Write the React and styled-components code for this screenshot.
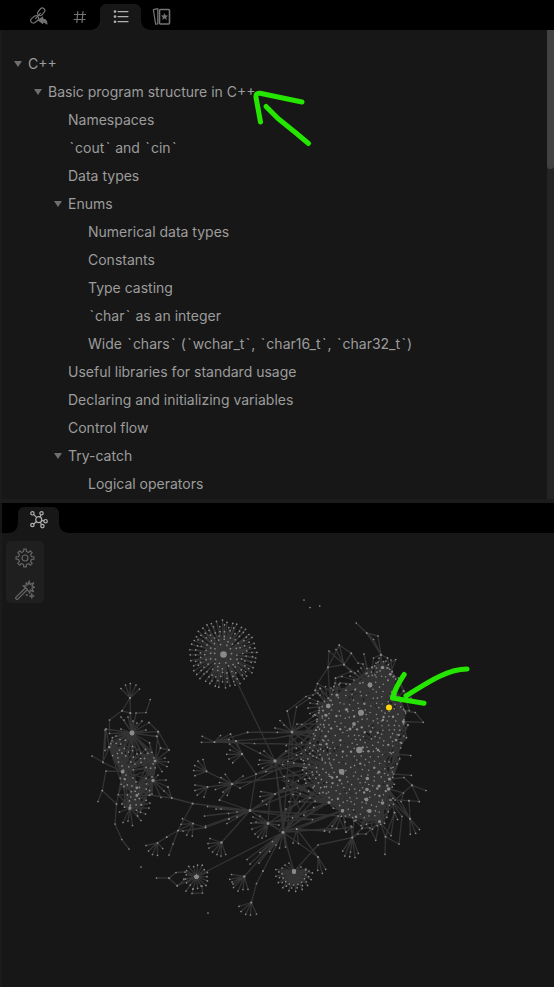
import React from "react";
import styled, { createGlobalStyle } from "styled-components";

const GlobalStyle = createGlobalStyle`
  * { box-sizing: border-box; }
  body { margin: 0; background: #171717; font-family: Inter, sans-serif; overflow: hidden; }
`;

const Sidebar = styled.div`
  position: relative;
  width: 554px;
  height: 987px;
  display: flex;
  flex-direction: column;
  background: #171717;
  overflow: hidden;
`;

const TabStrip = styled.div`
  height: 30px;
  flex: none;
  display: flex;
  align-items: flex-end;
  padding-left: ${(p) => (p.$inset ? 16 : 18)}px;
  margin-left: ${(p) => (p.$inset ? 2 : 0)}px;
  background: #000;
`;

const Tab = styled.div`
  position: relative;
  width: 41px;
  height: 26px;
  display: flex;
  align-items: center;
  justify-content: center;
  color: ${(p) => (p.$active ? "#b0b0b0" : "#747474")};
  background: ${(p) => (p.$active ? "#171717" : "transparent")};
  border-radius: 6px 6px 0 0;

  &::before,
  &::after {
    content: "";
    display: ${(p) => (p.$active ? "block" : "none")};
    position: absolute;
    bottom: 0;
    width: 9px;
    height: 9px;
  }
  &::before {
    right: 100%;
    background: radial-gradient(circle at 0 0, transparent 8.5px, #171717 9px);
  }
  &::after {
    left: 100%;
    background: radial-gradient(circle at 100% 0, transparent 8.5px, #171717 9px);
  }
`;

const OutlinePane = styled.div`
  height: 469px;
  flex: none;
  display: flex;
  border-left: 2px solid #1b1b1b;
`;

const Outline = styled.ul`
  flex: 1;
  margin: 0;
  padding: 20px 0 0 6px;
  list-style: none;
`;

const OutlineItem = styled.li`
  height: 28px;
  display: flex;
  align-items: center;
  gap: 6px;
  padding-left: ${(p) => p.$level * 20}px;
  font-size: 14px;
  line-height: 28px;
  color: #9c9c9c;
  white-space: pre;
`;

const Tick = styled.span`
  padding: 0 1.1px 0 1.4px;
`;

const Caret = styled.svg`
  width: 8px;
  height: 6px;
  margin-left: 6px;
  flex: none;
  visibility: ${(p) => (p.$open ? "visible" : "hidden")};
`;

const ScrollTrack = styled.div`
  width: 7px;
  background: #242424;
`;

const ScrollThumb = styled.div`
  height: 139px;
  background: #424242;
  border-radius: 0 0 4px 4px;
`;

const Divider = styled.div`
  height: 4px;
  flex: none;
  background: #1c1c1c;
`;

const GraphPane = styled.div`
  position: relative;
  flex: 1;
  display: flex;
  border-left: 2px solid #1b1b1b;
`;

const GraphCanvas = styled.svg`
  width: 552px;
  height: 454px;
  display: block;
`;

const GraphTools = styled.div`
  position: absolute;
  left: 4px;
  top: 8px;
  width: 38px;
  height: 62px;
  display: flex;
  flex-direction: column;
  align-items: center;
  justify-content: space-between;
  padding: 7px 0 3px;
  border-radius: 5px;
  background: #1f1f1f;
  color: #666;
`;

const Icon = styled.svg`
  width: 20px;
  height: 20px;
  display: block;
  fill: none;
  stroke: currentColor;
  stroke-width: 1.2;
  stroke-linecap: round;
  stroke-linejoin: round;
`;

const Marks = styled.svg`
  position: absolute;
  inset: 0;
  width: 554px;
  height: 987px;
  pointer-events: none;
  fill: none;
  stroke: #25e600;
  stroke-width: 5;
  stroke-linecap: round;
  stroke-linejoin: round;
`;

const BacklinkIcon = () => (
  <Icon viewBox="0 0 20 20">
    <rect x="8" y="2.4" width="8.4" height="5" rx="2.5" transform="rotate(-50 12.2 4.9)" />
    <rect x="1.4" y="9.8" width="8.6" height="5.2" rx="2.6" transform="rotate(-38 5.7 12.4)" />
    <path d="M6.6 11.6 11.4 6.4" />
    <path d="M9.6 13.2l4-3v1.9c3.2 0 4.4 2.5 4.2 4.9-.9-1.6-2.2-2.2-4.2-2.2v1.6z" fill="currentColor" />
  </Icon>
);

const HashIcon = () => (
  <Icon viewBox="0 0 20 20">
    <path d="M7.8 4.5 6.8 15.5M13 4.5l-1 11M4.5 7.5h11M4 12.5h11" />
  </Icon>
);

const ListIcon = () => (
  <Icon viewBox="0 0 20 20">
    <path d="M7 4.6h10M7 9.6h10M7 14.7h10" strokeWidth="1.2" />
    <g fill="currentColor" stroke="none">
      <circle cx="4" cy="4.6" r="1.3" />
      <circle cx="4" cy="9.6" r="1.3" />
      <circle cx="4" cy="14.7" r="1.3" />
    </g>
  </Icon>
);

const CardsIcon = () => (
  <Icon viewBox="0 0 20 20">
    <rect x="7.5" y="2.5" width="10" height="14.5" rx="1" strokeWidth="1.6" />
    <path d="M5.8 1.6 1.4 2.6l2.2 14.6 2.2-.3M5.8 1.6v15.3" />
    <path
      d="m12.5 6.6.9 2 2.2.2-1.6 1.5.5 2.2-2-1.2-2 1.2.5-2.2-1.6-1.5 2.2-.2z"
      fill="currentColor"
      strokeWidth="0.4"
    />
  </Icon>
);

const GraphIcon = () => (
  <Icon viewBox="0 0 20 20">
    <circle cx="9.7" cy="9.7" r="3" />
    <circle cx="3.4" cy="3.3" r="1.7" />
    <circle cx="12.5" cy="3.3" r="1.7" />
    <circle cx="16.6" cy="11.2" r="1.7" />
    <circle cx="13.4" cy="16.1" r="1.7" />
    <circle cx="3.4" cy="15" r="1.7" />
    <path d="m4.7 4.6 2.9 2.8M12 5l-1 2M12.8 10.4l2 .5M11.4 12.4l1.1 2.2M7.5 11.8 4.8 13.8" />
  </Icon>
);

const gearPath = (() => {
  const pts = [];
  for (let i = 0; i < 8; i++) {
    [[-0.22, 6.6], [-0.14, 9], [0.14, 9], [0.22, 6.6]].forEach(([off, r]) => {
      const a = (i * Math.PI) / 4 + off;
      pts.push(`${(10 + r * Math.sin(a)).toFixed(2)} ${(10 - r * Math.cos(a)).toFixed(2)}`);
    });
  }
  return `M${pts.join("L")}Z`;
})();

const GearIcon = () => (
  <Icon viewBox="0 0 20 20">
    <path d={gearPath} />
    <circle cx="10" cy="10" r="3" />
  </Icon>
);

const WandIcon = () => (
  <Icon viewBox="0 0 20 20">
    <path d="M.8 17.4 10.6 7.7l1.8 1.8-9.8 9.8c-.9.6-2.4-.9-1.8-1.9z" />
    <path d="M10.6 7.7 7.9 5.8l3.2.1.1-3.3 1.8 2.3L14.2.8l.9 3.8 3.6-1.8-1.8 3.4 2.6.9-2.6 1.3 1.6 3.2-3.3-1.5-.4 3.2-2.4-3.8" />
    <path d="m16.8 13.3.7 2 2 .7-2 .7-.7 2-.7-2-2-.7 2-.7z" fill="currentColor" strokeWidth="0.6" />
    <circle cx="11.8" cy="15" r=".5" />
  </Icon>
);

const OUTLINE = [
  [0, "C++", true],
  [1, "Basic program structure in C++", true],
  [2, "Namespaces"],
  [2, "`cout` and `cin`"],
  [2, "Data types"],
  [2, "Enums", true],
  [3, "Numerical data types"],
  [3, "Constants"],
  [3, "Type casting"],
  [3, "`char` as an integer"],
  [3, "Wide `chars` (`wchar_t`, `char16_t`, `char32_t`)"],
  [2, "Useful libraries for standard usage"],
  [2, "Declaring and initializing variables"],
  [2, "Control flow"],
  [2, "Try-catch", true],
  [3, "Logical operators"],
];

/* ---- Graph data ---- */

const nodes = [];
const links = [];

let seed = 20;
const random = () => {
  seed = (seed * 1664525 + 1013904223) % 4294967296;
  return seed / 4294967296;
};
const node = (x, y, r = 0.85) => nodes.push([x, y, r]);
const link = (a, b) => links.push([a[0], a[1], b[0], b[1]]);
const chain = (points) =>
  points.forEach((p, i) => {
    node(p[0], p[1]);
    if (i) link(points[i - 1], p);
  });
const fan = (x, y, r, leaves) => {
  leaves.forEach((p) => {
    node(p[0], p[1]);
    link([x, y], p);
  });
  node(x, y, r);
};
const nearest = (p, list, count) =>
  [...list]
    .sort((a, b) => Math.hypot(a[0] - p[0], a[1] - p[1]) - Math.hypot(b[0] - p[0], b[1] - p[1]))
    .slice(0, count);
const inside = (x, y, polygon) => {
  let hit = false;
  for (let i = 0, j = polygon.length - 1; i < polygon.length; j = i++) {
    const [xi, yi] = polygon[i];
    const [xj, yj] = polygon[j];
    if (yi > y !== yj > y && x < ((xj - xi) * (y - yi)) / (yj - yi) + xi) hit = !hit;
  }
  return hit;
};
const scatter = (polygon, count, gap) => {
  const out = [];
  const xs = polygon.map((p) => p[0]);
  const ys = polygon.map((p) => p[1]);
  const x0 = Math.min(...xs);
  const y0 = Math.min(...ys);
  for (let t = 0; t < 9000 && out.length < count; t++) {
    const x = x0 + random() * (Math.max(...xs) - x0);
    const y = y0 + random() * (Math.max(...ys) - y0);
    if (inside(x, y, polygon) && out.every((p) => Math.hypot(p[0] - x, p[1] - y) > gap)) out.push([x, y]);
  }
  return out;
};

// Isolated notes
[[304, 600], [310, 607.5], [319.7, 606], [141, 867], [208, 913]].forEach((p) => node(...p));

// Round cluster
for (let ring = 0; ring < 6; ring++) {
  const radius = 9 + ring * 4.8;
  const count = 10 + ring * 6;
  for (let i = 0; i < count; i++) {
    const a = ((i + (random() - 0.5) * 0.35) / count) * Math.PI * 2 + ring * 0.4;
    const r = radius + (random() - 0.5) * 2.4;
    const p = [223.5 + r * Math.cos(a), 654 + r * Math.sin(a)];
    node(...p);
    link([223.5, 654], p);
  }
}
node(223.5, 654.5, 3.3);
link([223.5, 654], [275, 761]);

// Left cluster
const leftHubs = [
  [132, 733, 2.4], [122.6, 771.7, 1.9], [109.3, 747, 1.3], [155, 761, 1.3], [153, 780.5, 1.5],
  [136.8, 787.8, 1.4], [136.8, 795.5, 1.4], [130, 808, 1.4], [124.5, 779, 1.1],
];
leftHubs.forEach((h) => node(...h));
fan(130, 698, 1, [[121, 688.5], [125.5, 685], [130.3, 683.5], [136, 685], [139.5, 689]]);
chain([[130, 698], [122.2, 710.5], [109.5, 720], [109.5, 733.5], [132, 733]]);
chain([[130, 698], [130.5, 713]]);
chain([[150.3, 699.5], [146, 712.5], [136, 713], [132, 733], [149, 722.5], [158.3, 731.7], [169, 750], [160.5, 748], [156.5, 736]]);
chain([[122, 711], [130.5, 713], [132, 733]]);
chain([[109.3, 747], [102.8, 762], [92, 756]]);
chain([[106, 729], [105, 750.5], [109.3, 747], [106, 729], [132, 733]]);
chain([[122.6, 771.7], [106, 771], [102.3, 790.5], [98, 801.5]]);
chain([[102.3, 790.5], [116.5, 804], [115, 824], [121.8, 839.5], [129, 849]]);
chain([[116.5, 804], [122.6, 771.7], [103, 762.5], [105, 730]]);
fan(155, 761, 1.3, [[169, 750], [165, 758], [168.5, 762], [167, 766.5], [162, 771.5], [158.3, 731.7], [160.5, 748]]);
fan(132, 733, 2.4, [
  [121, 717], [124, 720], [128, 717], [130, 713], [133, 721], [137, 723], [142, 721], [149, 722.5], [146, 730],
  [158, 731.7], [157, 736.5], [120, 739.5], [116, 736], [112, 741], [121, 729],
]);
fan(153, 780.5, 1.5, [[166, 780], [168, 787], [164, 791], [161, 797.5], [152, 794], [158, 775], [171.7, 798]]);
fan(130, 808, 1.4, [[119.5, 812], [123, 822.5], [132.5, 825.5], [128, 821], [141, 820.5], [145.5, 814], [149, 808], [150, 803], [141, 805]]);
chain([[153, 780.5], [150, 795], [171.7, 798], [192.6, 803.5]]);
chain([[168, 787], [171.7, 798]]);
scatter([[113, 736], [132, 742], [152, 742], [158, 762], [155, 776], [148, 806], [137, 817], [122, 806], [115, 786], [122, 772], [108, 748]], 72, 3.6).forEach((p) => {
  node(...p);
  nearest(p, leftHubs, 3 + Math.floor(random() * 2)).forEach((h) => link(p, h));
});
[[0, 1], [0, 2], [0, 3], [1, 3], [1, 2], [1, 4], [0, 4], [3, 4], [4, 7], [1, 7], [1, 5], [4, 6], [5, 7], [0, 7], [2, 7]].forEach(([a, b]) =>
  link(leftHubs[a], leftHubs[b])
);

// Middle web
fan(292, 732, 1.5, [[287.3, 711], [280, 720.5], [284, 725], [275, 728], [277.3, 732.3], [297, 724], [302, 724.5], [247.6, 732.3]]);
chain([[287.3, 711], [306, 696.5], [318, 693]]);
chain([[292, 732], [296.5, 707], [310, 698]]);
fan(214.5, 742, 1.1, [[202.3, 736.3], [201.5, 742.3], [220.5, 735.5], [230.5, 734], [229, 739.5], [254.5, 743.5], [247.6, 732.3], [236, 741]]);
fan(242, 754, 1.2, [[229.5, 744], [230, 750], [226.7, 754.3], [229, 759], [232.7, 762.7], [230.5, 734], [236, 741], [256, 774]]);
fan(275, 761, 1.7, [[264, 751], [260, 753], [259.5, 760], [258.5, 764.5], [262.5, 768], [266, 771.5], [236, 741], [286, 751]]);
fan(206.5, 771.3, 1.1, [[194.7, 765.5], [198, 761], [203, 759.5], [193.7, 770.5], [195, 775.7], [232, 784]]);
fan(232, 784, 1.3, [[219.5, 782.5], [221, 777.5], [225.3, 774.3], [227.3, 795.3], [223, 792], [215.5, 789.5], [240, 788], [243, 776], [207.5, 787], [219.5, 800]]);
fan(207.5, 787, 0.9, [[195, 785], [195, 790.5], [197.3, 795], [204, 797]]);
fan(250, 810.5, 1.4, [
  [219.5, 800], [216, 809], [207.5, 806.5], [192.6, 803.5], [228.5, 813.5], [227, 823.5], [237, 812], [204.5, 816],
  [205.5, 826], [237, 817], [256, 774], [221, 809], [229, 819],
]);
fan(275, 794, 1.1, [[261, 791.5], [260, 796.5], [262.5, 801], [266.5, 804.5], [284, 788]]);
fan(268, 823.5, 1.4, [[251, 823], [252, 829], [255, 834], [258, 837], [262, 838], [266, 836], [260, 816], [253, 817], [279, 825], [256, 822]]);
fan(283, 832.3, 1.6, [
  [247, 859.5], [250, 864], [260, 852.5], [259, 863], [269.7, 851.5], [272.5, 841.5], [276, 845], [263, 871], [196.5, 876.5],
  [279.5, 848], [285.5, 847], [294, 871.5], [268, 823.5], [318, 857], [296.7, 829], [275, 761], [250, 810.5], [286, 809],
]);
chain([[263, 871], [256.5, 883.5], [251.3, 902.5]]);
fan(251.3, 902.5, 1.1, [[239, 906.3], [241, 911.5], [245.7, 914.3], [250.5, 915], [256.5, 914]]);
fan(244.3, 876.5, 1.2, [[231.5, 874.5], [229.7, 879.3], [233, 884], [233.5, 887.5], [238, 891], [243, 889.5], [248, 889.3], [232, 882]]);
link([244.3, 876.5], [283, 832.3]);
fan(221.5, 842.5, 1.3, [[210, 838.5], [208, 843.5], [209, 848], [212.5, 852], [217, 854.5], [221, 856], [225.7, 854.5], [250, 810.5]]);
fan(193, 823.5, 1, [[182.5, 818.7], [181, 824.3], [178, 830.5], [186.7, 835], [192.3, 836], [205.5, 827.5]]);
fan(157.5, 843, 1, [[146, 845.5], [148.5, 851], [152.5, 854.5], [157.5, 855.3], [166.7, 837], [162.7, 848.5]]);
chain([[166.7, 837], [178, 830.5], [183, 831], [205.5, 827.5], [229, 819], [250, 810.5]]);
chain([[192.6, 803.5], [178, 830.5], [173, 844], [169, 855]]);
fan(318, 857, 1, [[317.7, 870.3], [322.3, 873.3], [325.7, 869.3]]);
fan(296.7, 829, 1, [[293, 843], [298.5, 843.5], [324.5, 831]]);
chain([[294, 871.5], [318, 845], [352.3, 837.5]]);
for (let i = 0; i < 30; i++) {
  const a = -0.25 + (i / 30) * Math.PI * 1.18;
  const r = 12 + (i % 3) * 3.2;
  fan(294, 871.5, 1.9, [[294 + r * Math.cos(a), 873 + r * Math.sin(a)]]);
}
[[285, 865], [282, 868], [289, 863], [301, 867], [306, 869]].forEach((p) => fan(294, 871.5, 1.9, [p]));
for (let i = 0; i < 17; i++) {
  const a = (i / 17) * Math.PI * 2;
  const r = 10.5 + (i % 3) * 1.2;
  fan(196.5, 876.7, 1.9, [[196.5 + r * Math.cos(a), 876.7 + r * Math.sin(a)]]);
}
chain([[156.5, 878], [169, 878.2], [176, 872.5], [185, 872], [196.5, 877], [185.5, 879], [177.3, 885.7], [169, 878.2]]);
chain([[177.3, 885.7], [196.5, 877], [186, 891]]);
chain([[193, 889], [192, 893.5], [202.5, 893], [202, 886]]);

// Main cluster
const mainHubs = [
  [370, 685, 2.4], [328.3, 706, 2.2], [361, 712.7, 3], [359.3, 750, 3.2], [341.7, 771.7, 2.8], [346.5, 709.5, 1.6],
  [354, 724, 1.9], [337, 695, 1.6], [326, 715.3, 1.5], [382.5, 667.5, 1.6], [390.3, 674.3, 1.4], [403.5, 721.5, 1.6],
  [367.3, 778.5, 1.8], [379, 772, 1.5], [379, 786, 1.5], [388.5, 789, 1.7], [389.5, 779, 1.5], [367, 789.5, 1.8],
  [366.5, 799.5, 1.9], [369.5, 811, 2.1], [382.5, 803, 1.8], [379.5, 821.5, 1.5], [342.5, 810.8, 1.7], [329, 802.5, 1.5],
  [350, 729, 1.5], [383, 720, 1.2], [378, 750, 1.3], [396, 740, 1.3],
];
const body = [
  [376, 670], [386, 672], [391, 688], [396, 702], [400, 722], [396, 740], [388, 760], [388, 795], [384, 810],
  [376, 820], [356, 817], [344, 806], [334, 796], [330, 784], [336, 765], [325, 745], [320, 728], [322, 706], [338, 696], [360, 690],
];
scatter(body, 250, 4).forEach((p) => {
  node(p[0], p[1], random() > 0.88 ? 1.2 : 0.8);
  nearest(p, mainHubs, 5).forEach((h) => link(p, h));
});
mainHubs.forEach((h) => {
  node(...h);
  nearest(h, mainHubs, 7).forEach((o) => link(h, o));
});
// Loose notes around the rim, each tied to nearby and distant hubs
body.forEach(([x, y], i) => {
  const [nx, ny] = body[(i + 1) % body.length];
  const steps = Math.max(1, Math.round(Math.hypot(nx - x, ny - y) / 4.5));
  for (let s = 0; s < steps; s++) {
    const px = x + ((nx - x) * s) / steps;
    const py = y + ((ny - y) * s) / steps;
    const dx = px - 360;
    const dy = py - 748;
    const d = Math.hypot(dx, dy);
    const out = 2 + random() * 9;
    const p = [px + (dx / d) * out, py + (dy / d) * out];
    node(...p);
    const near = nearest(p, mainHubs, 8);
    link(p, near[0]);
    link(p, near[1 + Math.floor(random() * 3)]);
    link(p, near[4 + Math.floor(random() * 4)]);
  }
});
scatter([[314, 705], [321, 698], [326, 720], [324, 740], [334, 760], [328, 798], [314, 790], [300, 778], [300, 750], [314, 738]], 52, 4).forEach((p) => {
  node(...p);
  nearest(p, mainHubs, 2).forEach((h) => link(p, h));
});
// Long links from the web into the main cluster
[
  [292, 732, 328, 706], [292, 732, 346, 728], [292, 732, 359, 750], [292, 732, 325, 742], [292, 732, 325, 715], [292, 732, 292, 760],
  [247.6, 732.3, 330, 733], [254.5, 743.5, 360, 745], [214.5, 742, 276.5, 738], [276.5, 738, 330, 728], [275, 761, 325, 742],
  [275, 761, 342, 772], [275, 761, 359, 750], [275, 761, 320, 790], [275, 761, 286, 842], [256, 774, 342, 757],
  [232, 784, 335, 770], [232, 784, 275, 767], [240, 788, 335, 740], [250, 810.5, 342, 772], [250, 810.5, 330, 760], [250, 810.5, 313, 820],
  [250, 810.5, 360, 817], [283, 832, 290, 735], [283, 832, 342, 772], [283, 832, 341, 811], [283, 832, 329, 802],
  [283, 832, 342, 790], [268, 823.5, 325, 785], [268, 823.5, 270, 796], [286, 809, 335, 784], [275, 794, 330, 780], [275, 794, 342, 772],
  [296.7, 829, 342, 811], [287, 832, 338, 828], [324, 831, 352, 827], [287, 832, 294, 771], [275, 761, 300, 810], [251, 823, 312, 819],
  [280, 778, 330, 760], [297, 724, 326, 724], [286, 751, 324, 738], [296.7, 829, 365, 800], [342, 811, 296.7, 829], [318, 857, 296.7, 829],
  [281, 780, 321, 798], [306, 782, 279, 832], [292, 732, 340, 765], [275, 761, 345, 710], [250, 810.5, 345, 750], [283, 832, 350, 745],
  [256, 774, 330, 740], [286, 751, 340, 772], [302, 724.5, 345, 750], [283, 832, 330, 770], [268, 823.5, 340, 800], [290, 735, 335, 790],
].forEach(([a, b, c, d]) => link([a, b], [c, d]));
scatter([[286, 745], [312, 735], [316, 810], [290, 822], [276, 800]], 30, 6).forEach((p) => {
  node(...p);
  if (random() > 0.3) link(p, nearest(p, mainHubs, 1)[0]);
});

// Fringe above the main cluster
chain([[356.3, 623], [366.7, 633], [378, 636], [381, 654.7], [366.7, 633], [373.5, 639.5], [381, 654.7], [382.5, 667.5]]);
chain([[387.5, 658], [381, 654.7], [373.5, 658], [371.5, 672]]);
chain([[317.5, 683.5], [328, 667.3], [329, 651], [344, 664.5], [339.3, 645], [351.3, 653.3], [344, 664.5], [336, 649.5]]);
chain([[339.3, 645], [328, 667.3], [344, 664.5], [355, 673], [370, 685]]);
chain([[351.3, 653.3], [358, 663], [363, 664], [370, 685], [364, 654], [371, 685]]);
chain([[315.5, 690], [317.5, 683.5], [337, 695], [335.5, 678], [350.5, 671.5], [344, 664.5]]);
chain([[328, 667.3], [330, 700], [320.5, 688.5], [313, 695]]);
chain([[335.5, 678], [342, 676.5], [370, 685], [367, 668.5], [382.5, 667.5], [395.7, 659.5], [388, 680]]);
chain([[387.5, 658], [390.3, 674.3], [398.5, 678], [404, 691], [392, 672], [391, 660]]);
fan(370, 685, 2.4, [
  [344, 664.5], [350, 676], [354, 680], [358, 671], [361, 668], [367, 673], [372, 667], [375, 675], [378, 662], [346, 684],
  [351, 671.5], [381, 655], [387, 668], [340, 683], [355, 690], [333, 690],
]);
fan(382.5, 667.5, 1.6, [[376, 663], [379, 658], [386, 661], [388, 668], [394, 676], [377, 672]]);
fan(328.3, 706, 2.2, [
  [310, 703], [308, 708], [310, 713.5], [313, 716], [315, 690.5], [320, 688], [325.5, 686.5], [331, 688], [309, 698], [320, 695], [335, 683],
]);

// Fringe right of and below the main cluster
chain([[403.5, 721.5], [423.3, 722.3], [415.3, 712.5], [405, 711], [409.3, 710.5], [403.5, 691]]);
chain([[403.5, 721.5], [408, 725], [396, 740], [400.5, 742.5], [391, 768], [399, 735], [403, 722]]);
chain([[408, 725], [400.5, 742.5], [388, 775], [404, 736]]);
chain([[389, 762], [391.5, 753.5], [410.7, 755.5]]);
chain([[389.5, 779], [393.5, 774], [411.3, 775.3]]);
chain([[389.5, 779], [404, 777.5], [412, 785.3], [426, 790.5]]);
chain([[412, 785.3], [419.3, 801.7], [409, 800.7], [395, 800], [412, 785.3]]);
chain([[389, 789], [403.5, 793], [401, 801.5], [410, 818.7], [391, 800], [410, 818.7]]);
fan(410, 818.7, 1, [[410.3, 834.3], [415.7, 833.3], [419.5, 829.5], [409, 800.7], [388.5, 789]]);
chain([[388.5, 789], [394.5, 812.5], [397.5, 819.5]]);
chain([[390, 800], [402, 816.3], [399, 844], [385.5, 836.7], [385, 854.3]]);
chain([[379.5, 821.5], [385.5, 836.7], [394.5, 812.5]]);
chain([[394.5, 812.5], [391, 835.7], [379.5, 821.5], [375.7, 840.3], [370, 828], [362, 828]]);
chain([[379.5, 821.5], [366, 834], [358, 834], [352.3, 837.5], [362, 828.5], [369, 811]]);
fan(352.3, 837.5, 1.1, [[342.7, 851], [344.7, 856], [349.7, 856.7], [350.5, 852], [355, 857.5], [358.3, 853.3], [351, 826], [354, 821]]);
fan(342.5, 810.8, 1.7, [[324.5, 830.5], [329.5, 832], [332, 826], [336.5, 828.5], [346, 832], [345, 822], [312.5, 819.5]]);
chain([[352, 827], [346, 832], [338, 816]]);
fan(403.5, 691, 0.9, [[389, 708], [411, 698]]);

const linkPath = links.map(([x1, y1, x2, y2]) => `M${x1.toFixed(1)} ${y1.toFixed(1)}L${x2.toFixed(1)} ${y2.toFixed(1)}`).join("");

const NoteGraph = () => (
  <GraphCanvas viewBox="2 533 552 454">
    <path d={linkPath} stroke="#333" strokeWidth="1.3" fill="none" />
    <g fill="#8a8a8a">
      {nodes.map(([x, y, r], i) => (
        <circle key={i} cx={x} cy={y} r={r} />
      ))}
    </g>
    <circle cx="389" cy="707.5" r="3" fill="#ffd60a" />
  </GraphCanvas>
);

const Label = ({ text }) => (
  <span>{text.split(/(`)/).map((part, i) => (part === "`" ? <Tick key={i}>`</Tick> : part))}</span>
);

export default function App() {
  return (
    <Sidebar>
      <GlobalStyle />
      <TabStrip>
        <Tab><BacklinkIcon /></Tab>
        <Tab><HashIcon /></Tab>
        <Tab $active><ListIcon /></Tab>
        <Tab><CardsIcon /></Tab>
      </TabStrip>
      <OutlinePane>
        <Outline>
          {OUTLINE.map(([level, label, open]) => (
            <OutlineItem key={label} $level={level}>
              <Caret viewBox="0 0 8 6" $open={open}>
                <path d="M0 0h8L4 6z" fill="#6e6e6e" />
              </Caret>
              <Label text={label} />
            </OutlineItem>
          ))}
        </Outline>
        <ScrollTrack><ScrollThumb /></ScrollTrack>
      </OutlinePane>
      <Divider />
      <TabStrip $inset>
        <Tab $active><GraphIcon /></Tab>
      </TabStrip>
      <GraphPane>
        <NoteGraph />
        <GraphTools>
          <GearIcon />
          <WandIcon />
        </GraphTools>
      </GraphPane>
      <Marks viewBox="0 0 554 987">
        <path d="M302 102 260 93.3Q255.500 92.500 256 97.500L260.500 122" />
        <path d="M266 106.500 278 118.500 296 133 308.500 143.500" />
        <path d="M404.200 674.500Q395 688 392.500 698L424 703.300" />
        <path d="M406 696C424 685 446 669 467 669" />
      </Marks>
    </Sidebar>
  );
}
